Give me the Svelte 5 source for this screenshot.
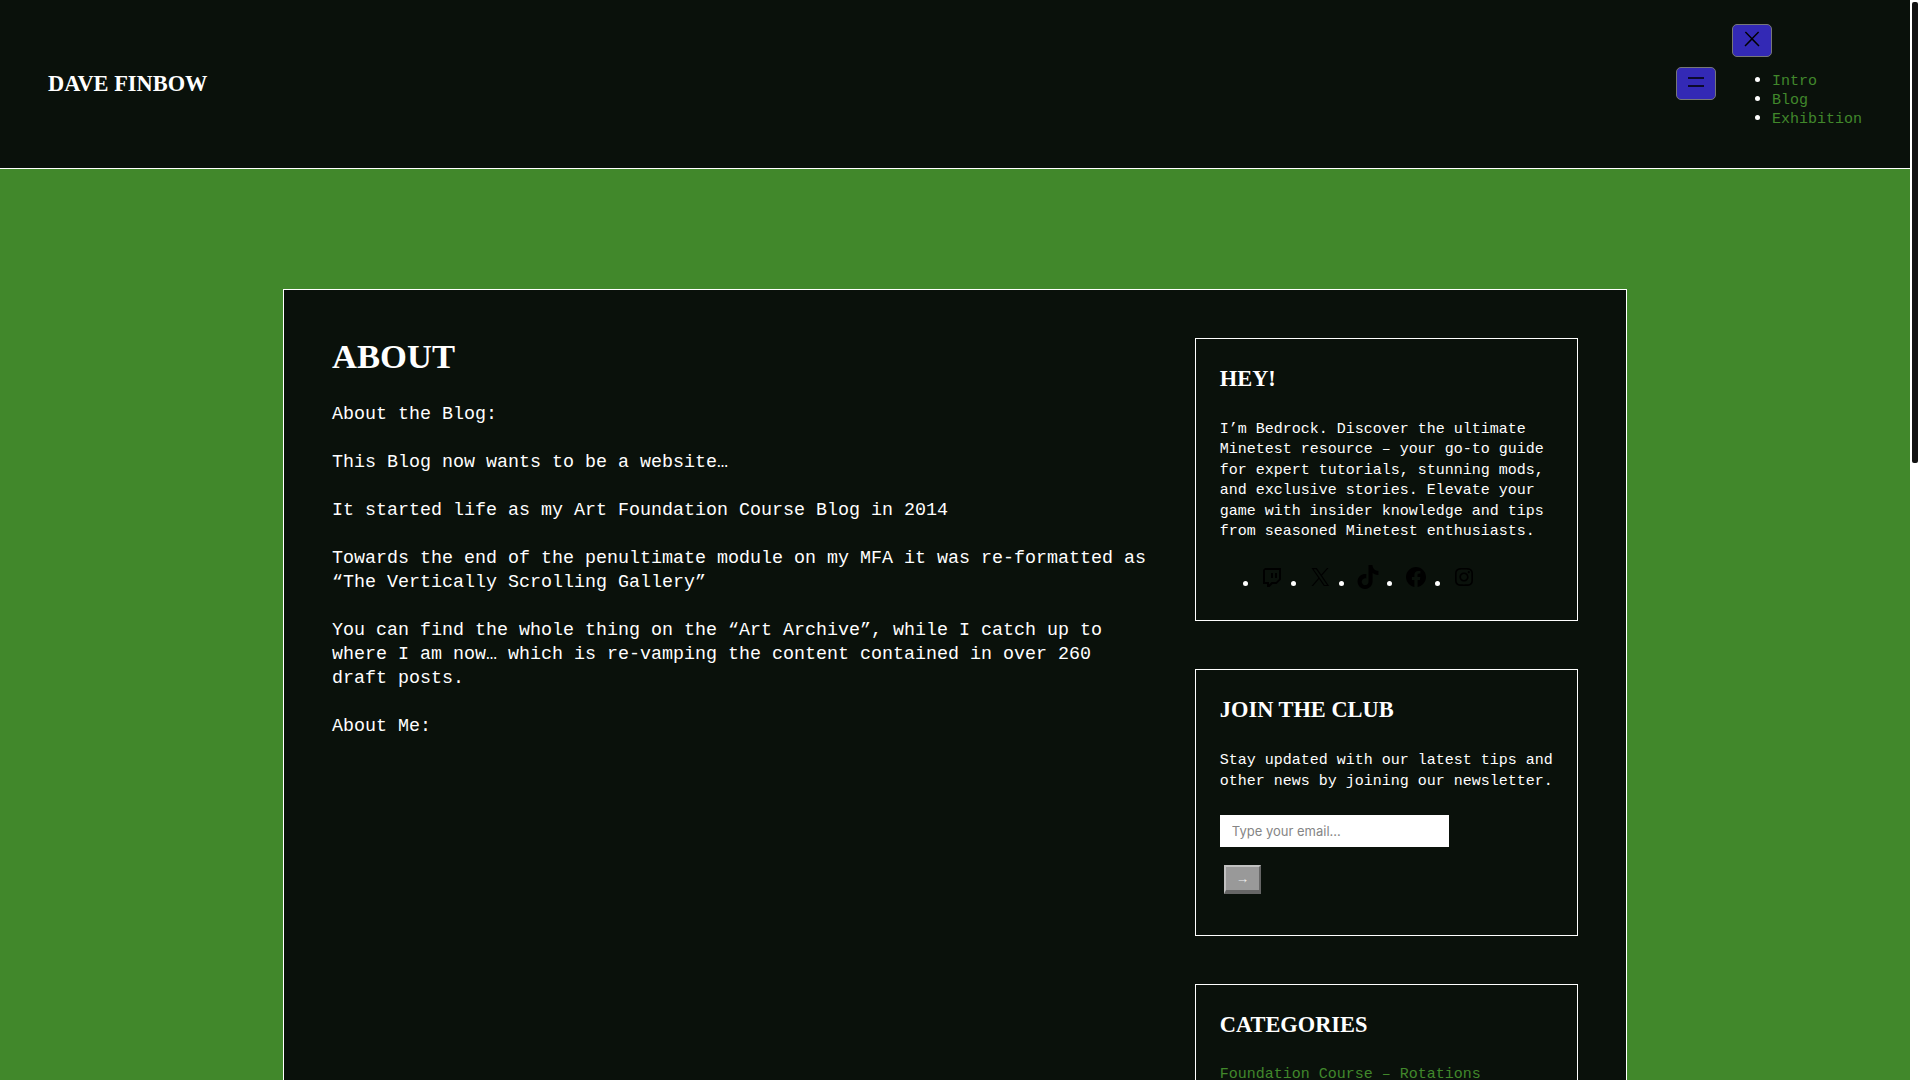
<script>
  const nav = ['Intro', 'Blog', 'Exhibition'];
  const paragraphs = [
    'About the Blog:',
    'This Blog now wants to be a website…',
    'It started life as my Art Foundation Course Blog in 2014',
    'Towards the end of the penultimate module on my MFA it was re-formatted as “The Vertically Scrolling Gallery”',
    'You can find the whole thing on the “Art Archive”, while I catch up to where I am now… which is re-vamping the content contained in over 260 draft posts.',
    'About Me:'
  ];
  const social = [
    { name: 'Twitch', box: '0 0 24 24', d: 'M5 3H21V14.5L16.5 19H12.5L9.5 22H7V19H3V5ZM5 5V17H9V19.5L11.5 17H16L19 14V5ZM11 8h2v5h-2zM15 8h2v5h-2z' },
    { name: 'X', box: '0 0 24 24', d: 'M13.982 10.622 20.54 3h-1.554l-5.693 6.618L8.745 3H3.5l6.876 10.007L3.5 21h1.554l6.012-6.989L15.868 21h5.245l-7.131-10.378Zm-2.128 2.474-.697-.997-5.543-7.93H8l4.474 6.4.697.996 5.815 8.318h-2.387l-4.745-6.787Z' },
    { name: 'TikTok', box: '0 0 32 32', d: 'M16.708 0.027c1.745-0.027 3.48-0.011 5.213-0.027 0.105 2.041 0.839 4.12 2.333 5.563 1.491 1.479 3.6 2.156 5.652 2.385v5.369c-1.923-0.063-3.855-0.463-5.6-1.291-0.76-0.344-1.468-0.787-2.161-1.24-0.009 3.896 0.016 7.787-0.025 11.667-0.104 1.864-0.719 3.719-1.803 5.255-1.744 2.557-4.771 4.224-7.88 4.276-1.907 0.109-3.812-0.411-5.437-1.369-2.693-1.588-4.588-4.495-4.864-7.615-0.032-0.667-0.043-1.333-0.019-1.984 0.24-2.537 1.495-4.964 3.443-6.615 2.208-1.923 5.301-2.839 8.197-2.297 0.027 1.975-0.052 3.948-0.052 5.923-1.323-0.428-2.869-0.308-4.025 0.495-0.844 0.556-1.485 1.372-1.819 2.333-0.276 0.676-0.197 1.427-0.181 2.145 0.317 2.188 2.421 4.027 4.667 3.828 1.489-0.016 2.916-0.88 3.692-2.145 0.251-0.443 0.532-0.896 0.547-1.417 0.131-2.385 0.079-4.76 0.095-7.145 0.011-5.375-0.016-10.735 0.025-16.093z' },
    { name: 'Facebook', box: '0 0 24 24', d: 'M12 2C6.5 2 2 6.5 2 12c0 5 3.7 9.1 8.4 9.9v-7H7.9V12h2.5V9.8c0-2.5 1.5-3.9 3.8-3.9 1.1 0 2.2.2 2.2.2v2.5h-1.3c-1.2 0-1.6.8-1.6 1.6V12h2.8l-.4 2.9h-2.3v7C18.3 21.1 22 17 22 12c0-5.5-4.5-10-10-10z' },
    { name: 'Instagram', box: '0 0 24 24', d: 'M12,4.622c2.403,0,2.688,0.009,3.637,0.052c0.877,0.04,1.354,0.187,1.671,0.31c0.42,0.163,0.72,0.358,1.035,0.673 c0.315,0.315,0.51,0.615,0.673,1.035c0.123,0.317,0.27,0.794,0.31,1.671c0.043,0.949,0.052,1.234,0.052,3.637 s-0.009,2.688-0.052,3.637c-0.04,0.877-0.187,1.354-0.31,1.671c-0.163,0.42-0.358,0.72-0.673,1.035 c-0.315,0.315-0.615,0.51-1.035,0.673c-0.317,0.123-0.794,0.27-1.671,0.31c-0.949,0.043-1.234,0.052-3.637,0.052 s-2.688-0.009-3.637-0.052c-0.877-0.04-1.354-0.187-1.671-0.31c-0.42-0.163-0.72-0.358-1.035-0.673 c-0.315-0.315-0.51-0.615-0.673-1.035c-0.123-0.317-0.27-0.794-0.31-1.671C4.631,14.688,4.622,14.403,4.622,12 s0.009-2.688,0.052-3.637c0.04-0.877,0.187-1.354,0.31-1.671c0.163-0.42,0.358-0.72,0.673-1.035 c0.315-0.315,0.615-0.51,1.035-0.673c0.317-0.123,0.794-0.27,1.671-0.31C9.312,4.631,9.597,4.622,12,4.622 M12,3 C9.556,3,9.249,3.01,8.289,3.054C7.331,3.098,6.677,3.25,6.105,3.472C5.513,3.702,5.011,4.01,4.511,4.511 c-0.5,0.5-0.808,1.002-1.038,1.594C3.25,6.677,3.098,7.331,3.054,8.289C3.01,9.249,3,9.556,3,12c0,2.444,0.01,2.751,0.054,3.711 c0.044,0.958,0.196,1.612,0.418,2.185c0.23,0.592,0.538,1.094,1.038,1.594c0.5,0.5,1.002,0.808,1.594,1.038 c0.572,0.222,1.227,0.375,2.185,0.418C9.249,20.99,9.556,21,12,21s2.751-0.01,3.711-0.054c0.958-0.044,1.612-0.196,2.185-0.418 c0.592-0.23,1.094-0.538,1.594-1.038c0.5-0.5,0.808-1.002,1.038-1.594c0.222-0.572,0.375-1.227,0.418-2.185 C20.99,14.751,21,14.444,21,12s-0.01-2.751-0.054-3.711c-0.044-0.958-0.196-1.612-0.418-2.185c-0.23-0.592-0.538-1.094-1.038-1.594 c-0.5-0.5-1.002-0.808-1.594-1.038c-0.572-0.222-1.227-0.375-2.185-0.418C14.751,3.01,14.444,3,12,3L12,3z M12,7.378 c-2.552,0-4.622,2.069-4.622,4.622S9.448,16.622,12,16.622s4.622-2.069,4.622-4.622S14.552,7.378,12,7.378z M12,15 c-1.657,0-3-1.343-3-3s1.343-3,3-3s3,1.343,3,3S13.657,15,12,15z M16.804,6.116c-0.596,0-1.08,0.484-1.08,1.08 s0.484,1.08,1.08,1.08c0.596,0,1.08-0.484,1.08-1.08S17.401,6.116,16.804,6.116z' }
  ];
</script>

<div class="viewport">
  <div class="page">
    <header class="header">
      <a class="logo" href="#home">Dave Finbow</a>
      <div class="header-right">
        <button class="menu-btn open" aria-label="Open menu">
          <svg viewBox="0 0 24 24" width="24" height="24"><path d="M4 7.25h16v1.5H4zM4 15.25h16v1.5H4z" /></svg>
        </button>
        <nav class="nav">
          <button class="menu-btn" aria-label="Close menu">
            <svg viewBox="0 0 24 24" width="24" height="24"><path d="M13 11.8l6.1-6.3-1-1-6.1 6.2-6.1-6.2-1 1 6.1 6.3-6.5 6.7 1 1 6.5-6.6 6.5 6.6 1-1z" /></svg>
          </button>
          <ul class="nav-list">
            {#each nav as item}
              <li><a href="#top">{item}</a></li>
            {/each}
          </ul>
        </nav>
      </div>
    </header>

    <main class="main">
      <div class="card">
        <article class="article">
          <h1>About</h1>
          {#each paragraphs as p}
            <p>{p}</p>
          {/each}
        </article>

        <aside class="sidebar">
          <section class="box">
            <h2>Hey!</h2>
            <p>I’m Bedrock. Discover the ultimate Minetest resource – your go-to guide for expert tutorials, stunning mods, and exclusive stories. Elevate your game with insider knowledge and tips from seasoned Minetest enthusiasts.</p>
            <ul class="social">
              {#each social as s}
                <li>
                  <a href="#top" aria-label={s.name}>
                    <svg viewBox={s.box} width="24" height="24"><path fill-rule="evenodd" d={s.d} /></svg>
                  </a>
                </li>
              {/each}
            </ul>
          </section>

          <section class="box">
            <h2>Join the Club</h2>
            <p>Stay updated with our latest tips and other news by joining our newsletter.</p>
            <form class="form" onsubmit={(e) => e.preventDefault()}>
              <input type="email" placeholder="Type your email..." />
              <button class="send" type="submit">→</button>
            </form>
          </section>

          <section class="box">
            <h2>Categories</h2>
            <ul class="cats">
              <li><a href="#top">Foundation Course – Rotations</a></li>
            </ul>
          </section>
        </aside>
      </div>
    </main>
  </div>
  <div class="scrollbar" aria-hidden="true">
    <div class="thumb"></div>
  </div>
</div>

<style>
  :global(body) {
    margin: 0;
    background: #fff;
  }
  .viewport {
    display: flex;
    align-items: stretch;
  }
  .scrollbar {
    flex: 0 0 10px;
    box-sizing: border-box;
    position: sticky;
    top: 0;
    height: 100vh;
    padding: 2px;
    background: #fff;
  }
  .thumb {
    height: 461px;
    background: #121212;
    border-radius: 2px;
  }
  .page {
    flex: 1;
    min-width: 0;
    font-family: "Liberation Mono", monospace;
    color: #fff;
    background: #41882b;
  }
  a {
    color: #41882b;
    text-decoration: none;
  }
  .header {
    display: flex;
    align-items: center;
    justify-content: space-between;
    padding: 24px 48px;
    background: #0a110b;
    border-bottom: 1px solid #fff;
    height: 120px;
  }
  .logo {
    font-family: "Liberation Serif", serif;
    font-weight: 700;
    font-size: 22.4px;
    color: #fff;
    text-transform: uppercase;
  }
  .header-right {
    display: flex;
    align-items: center;
    gap: 16px;
  }
  .menu-btn {
    display: flex;
    align-items: center;
    justify-content: center;
    width: 40px;
    height: 33px;
    padding: 0 0 3px;
    background: #3329b5;
    border: 1px solid #777;
    border-radius: 5px;
  }
  .menu-btn.open {
    margin-top: -1px;
  }
  .menu-btn svg {
    fill: #000;
  }
  .nav-list {
    margin: 14px 0 16px;
    padding-left: 40px;
    font-size: 18.33px;
    line-height: 19px;
  }
  .nav-list li {
    height: 19px;
  }
  .nav-list a {
    font-size: 15px;
  }
  .main {
    padding: 120px 0;
    min-height: 2112px;
  }
  .card {
    display: grid;
    grid-template-columns: 1fr 383.2px;
    gap: 48px;
    box-sizing: border-box;
    width: 1344px;
    margin: 0 auto;
    padding: 48px;
    background: #0a110b;
    border: 1px solid #fff;
  }
  h1, h2 {
    font-family: "Liberation Serif", serif;
    font-weight: 700;
    text-transform: uppercase;
    margin: 0;
    color: #fff;
  }
  h1 {
    font-size: 34.6px;
    line-height: 36px;
    margin-bottom: 29px;
  }
  .article p {
    margin: 0 0 24px;
    font-size: 18.33px;
    line-height: 24px;
  }
  .sidebar {
    display: flex;
    flex-direction: column;
    gap: 48px;
  }
  .box {
    padding: 24px;
    border: 1px solid #fff;
    background: #0a110b;
  }
  .box h2 {
    font-size: 22.4px;
    line-height: 31px;
    margin-bottom: 26px;
  }
  .box p {
    margin: 0 0 24.5px;
    font-size: 15px;
    line-height: 20.4px;
  }
  .social {
    display: flex;
    gap: 24px;
    margin: -2px 0 0;
    padding: 0 0 1.5px 40px;
    font-size: 18.33px;
  }
  .social svg {
    display: inline-block;
    fill: #000;
  }
  .form {
    display: block;
    margin: -2px 0 2px;
  }
  .form input {
    display: block;
    box-sizing: border-box;
    width: 229px;
    height: 32px;
    padding: 0 12px;
    border: 0;
    border-radius: 0;
    background: #fff;
    font-family: Inter, sans-serif;
    font-size: 13px;
  }
  .form input::placeholder {
    color: #858585;
  }
  .send {
    display: block;
    box-sizing: border-box;
    width: 37px;
    height: 29px;
    margin: 18px 0 17px 4px;
    padding: 0;
    background: #999;
    color: #eee;
    font-family: "Liberation Sans", sans-serif;
    font-size: 13.33px;
    border-style: solid;
    border-width: 2px 2px 4px;
    border-color: #c1c1c1 #666 #666 #c1c1c1;
  }
  .cats {
    list-style: none;
    margin: -1px 0 0;
    padding: 0;
    font-size: 15px;
    line-height: 20.4px;
  }
</style>
